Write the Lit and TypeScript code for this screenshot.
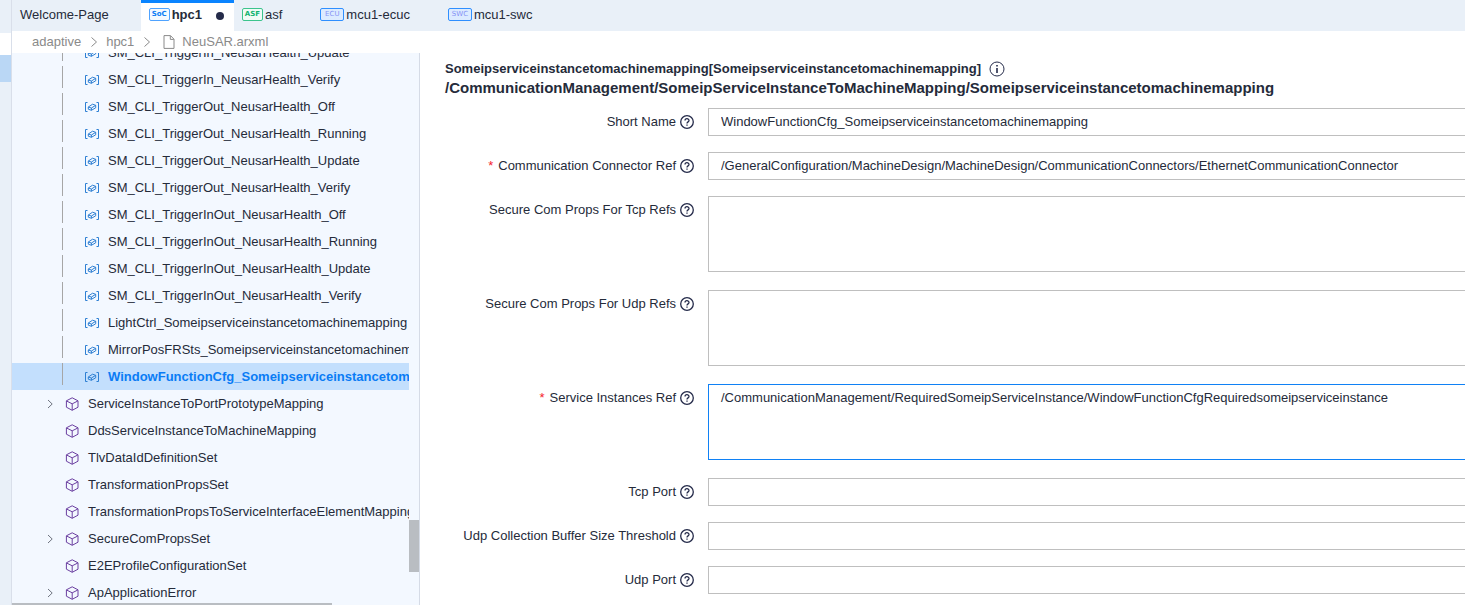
import { LitElement, html, css, svg, nothing } from "lit";
import { customElement } from "lit/decorators.js";
import { classMap } from "lit/directives/class-map.js";

interface Tab {
  label: string;
  badge?: string;
  kind?: string;
  active?: boolean;
}

interface Node {
  label: string;
  leaf?: boolean;
  expandable?: boolean;
  selected?: boolean;
}

interface Field {
  id: string;
  label: string;
  value?: string;
  required?: boolean;
  multiline?: boolean;
  focused?: boolean;
}

const TABS: Tab[] = [
  { label: "Welcome-Page" },
  { label: "hpc1", badge: "SoC", kind: "soc", active: true },
  { label: "asf", badge: "ASF", kind: "asf" },
  { label: "mcu1-ecuc", badge: "ECU", kind: "mcu" },
  { label: "mcu1-swc", badge: "SWC", kind: "mcu" },
];

const NODES: Node[] = [
  { label: "SM_CLI_TriggerIn_NeusarHealth_Update", leaf: true },
  { label: "SM_CLI_TriggerIn_NeusarHealth_Verify", leaf: true },
  { label: "SM_CLI_TriggerOut_NeusarHealth_Off", leaf: true },
  { label: "SM_CLI_TriggerOut_NeusarHealth_Running", leaf: true },
  { label: "SM_CLI_TriggerOut_NeusarHealth_Update", leaf: true },
  { label: "SM_CLI_TriggerOut_NeusarHealth_Verify", leaf: true },
  { label: "SM_CLI_TriggerInOut_NeusarHealth_Off", leaf: true },
  { label: "SM_CLI_TriggerInOut_NeusarHealth_Running", leaf: true },
  { label: "SM_CLI_TriggerInOut_NeusarHealth_Update", leaf: true },
  { label: "SM_CLI_TriggerInOut_NeusarHealth_Verify", leaf: true },
  { label: "LightCtrl_Someipserviceinstancetomachinemapping", leaf: true },
  { label: "MirrorPosFRSts_Someipserviceinstancetomachinemapping", leaf: true },
  { label: "WindowFunctionCfg_Someipserviceinstancetomachinemapping", leaf: true, selected: true },
  { label: "ServiceInstanceToPortPrototypeMapping", expandable: true },
  { label: "DdsServiceInstanceToMachineMapping" },
  { label: "TlvDataIdDefinitionSet" },
  { label: "TransformationPropsSet" },
  { label: "TransformationPropsToServiceInterfaceElementMapping" },
  { label: "SecureComPropsSet", expandable: true },
  { label: "E2EProfileConfigurationSet" },
  { label: "ApApplicationError", expandable: true },
];

const FIELDS: Field[] = [
  { id: "short-name", label: "Short Name", value: "WindowFunctionCfg_Someipserviceinstancetomachinemapping" },
  {
    id: "connector",
    label: "Communication Connector Ref",
    required: true,
    value: "/GeneralConfiguration/MachineDesign/MachineDesign/CommunicationConnectors/EthernetCommunicationConnector",
  },
  { id: "tcp-refs", label: "Secure Com Props For Tcp Refs", multiline: true },
  { id: "udp-refs", label: "Secure Com Props For Udp Refs", multiline: true },
  {
    id: "instances",
    label: "Service Instances Ref",
    required: true,
    multiline: true,
    focused: true,
    value: "/CommunicationManagement/RequiredSomeipServiceInstance/WindowFunctionCfgRequiredsomeipserviceinstance",
  },
  { id: "tcp-port", label: "Tcp Port" },
  { id: "udp-threshold", label: "Udp Collection Buffer Size Threshold" },
  { id: "udp-port", label: "Udp Port" },
];

const cubeIcon = html`<svg class="cube" width="14" height="14" viewBox="0 0 14 14" aria-hidden="true">
  ${svg`<path d="M7.2 .8 13 3.8V10.2L7.2 13.3 1.4 10.2V3.8Z M1.6 4 7.2 6.8 12.8 4 M7.2 6.8V13.2" />`}
</svg>`;

const refIcon = html`<svg class="ref" width="16" height="12" viewBox="0 0 16 12" aria-hidden="true">
  ${svg`<path d="M3.5 1.5H1.5V10.5H3.5 M12.5 1.5H14.5V10.5H12.5" />
    <path d="M4.3 6 8.6 3.2 11.7 4.3V6.8L7.4 9.3 4.3 8.2Z M4.3 6 7.4 7 11.7 4.3 M7.4 7V9.3" />`}
</svg>`;

const chevron = html`<svg class="chevron" width="10" height="10" viewBox="0 0 10 10" aria-hidden="true">
  ${svg`<path d="M3 1 7.2 5 3 9" />`}
</svg>`;

const separator = html`<svg class="separator" width="8" height="12" viewBox="0 0 8 12" aria-hidden="true">
  ${svg`<path d="M1.5 1.5 6.5 6 1.5 10.5" />`}
</svg>`;

const fileIcon = html`<svg class="file" width="12" height="14" viewBox="0 0 12 14" aria-hidden="true">
  ${svg`<path d="M1 .6H7.5L11 4.2V13.4H1Z M7.3 .8V4.4H10.8" />`}
</svg>`;

const helpIcon = html`<svg class="help" width="14" height="14" viewBox="0 0 14 14" aria-hidden="true">
  ${svg`<circle cx="7" cy="7" r="6.3" />
    <path d="M5 5.6C5 3.1 9 3.1 9 5.5 9 6.9 7 6.9 7 8.5 M7 9.5V10.7" />`}
</svg>`;

const infoIcon = html`<svg class="info" width="16" height="16" viewBox="0 0 16 16" aria-hidden="true">
  ${svg`<circle cx="8" cy="8" r="7" /><path class="stem" d="M8 4V5.6 M8 7V12" />`}
</svg>`;

@customElement("app-tabs")
class AppTabs extends LitElement {
  static styles = css`
    :host {
      display: block;
      background: #e9f0f8;
    }
    .bar {
      display: flex;
      height: 31px;
    }
    .tab {
      display: flex;
      align-items: center;
      gap: 2px;
      padding: 0 30px 2px 8px;
      border: 0;
      background: none;
      color: #252b3a;
      font: 13px/18px "Liberation Sans", Arial, sans-serif;
      white-space: nowrap;
    }
    .plain {
      padding-right: 32px;
    }
    .active {
      padding: 0 10px 2px 8px;
      background: #fff;
      box-shadow: inset 0 3px #0a84ff;
      font-weight: bold;
    }
    .badge {
      box-sizing: border-box;
      width: 21px;
      height: 13px;
      border: 1px solid #4fa3ff;
      border-radius: 2px;
      background: #f4f9ff;
      color: #0a7cf5;
      font: bold 7px/11px "DejaVu Sans", sans-serif;
      text-align: center;
    }
    .asf {
      border-color: #3cc48d;
      background: #f0fbf6;
      color: #12b370;
    }
    .mcu {
      width: 24px;
      border-color: #2f8fff;
      background: #dcebff;
      color: #8592f5;
      font-weight: normal;
    }
    .dot {
      width: 8px;
      height: 8px;
      margin: 2px 0 0 12px;
      border-radius: 50%;
      background: #252b4a;
    }
  `;

  render() {
    return html`<nav class="bar" role="tablist">
      ${TABS.map(
        (t) => html`<button
          role="tab"
          aria-selected=${t.active ? "true" : "false"}
          class=${classMap({ tab: true, active: !!t.active, plain: !t.badge })}
        >
          ${t.badge ? html`<span class=${classMap({ badge: true, [t.kind!]: true })}>${t.badge}</span>` : nothing}
          <span>${t.label}</span>
          ${t.active ? html`<span class="dot"></span>` : nothing}
        </button>`
      )}
    </nav>`;
  }
}

@customElement("app-tree")
class AppTree extends LitElement {
  static styles = css`
    :host {
      display: flex;
      position: relative;
      overflow: hidden;
      border-right: 1px solid #d5dbe6;
      background: #f3f8ff;
    }
    .rows {
      flex: 1;
      min-width: 0;
      overflow: hidden;
      margin: -14px 0 0;
      padding: 0;
      list-style: none;
    }
    .row {
      display: flex;
      align-items: center;
      height: 27px;
      padding-left: 33px;
      white-space: nowrap;
    }
    .leaf {
      padding-left: 50px;
    }
    .selected {
      background: #c3dffd;
      color: #0a7cf5;
      font-weight: bold;
    }
    .guide {
      flex: none;
      align-self: flex-start;
      width: 1px;
      height: 22px;
      margin-right: 21px;
      background: #a6a6a6;
    }
    .slot {
      flex: none;
      display: flex;
      width: 20px;
    }
    .label {
      line-height: 18px;
    }
    svg {
      flex: none;
      fill: none;
    }
    .cube {
      margin: 1px 9px 0 0;
      stroke: #6b3fa0;
    }
    .ref {
      margin-right: 8px;
      stroke: #2d7fd3;
    }
    .chevron {
      stroke: #6f7480;
    }
    .gutter {
      flex: none;
      width: 10px;
    }
    .thumb {
      height: 52px;
      margin-top: 467px;
      background: #b9bdc2;
    }
    .hthumb {
      position: absolute;
      left: 0;
      bottom: 0;
      width: 320px;
      height: 2px;
      background: #b9bdc2;
    }
  `;

  render() {
    return html`<ul class="rows" role="tree">
        ${NODES.map(
          (n) => html`<li
            role="treeitem"
            aria-selected=${n.selected ? "true" : "false"}
            class=${classMap({ row: true, leaf: !!n.leaf, selected: !!n.selected })}
          >
            ${n.leaf
              ? html`<span class="guide"></span>${refIcon}`
              : html`<span class="slot">${n.expandable ? chevron : nothing}</span>${cubeIcon}`}
            <span class="label">${n.label}</span>
          </li>`
        )}
      </ul>
      <div class="gutter"><div class="thumb"></div></div>
      <div class="hthumb"></div>`;
  }
}

@customElement("app-form")
class AppForm extends LitElement {
  static styles = css`
    :host {
      display: block;
      overflow: hidden;
      padding: 7px 0 0 25px;
      background: #fff;
    }
    .title,
    .path {
      margin: 0;
      font-weight: bold;
      white-space: nowrap;
    }
    .title {
      display: flex;
      align-items: center;
      gap: 8px;
      font-size: 13px;
      line-height: 18px;
    }
    .path {
      margin-bottom: 10px;
      font-size: 15px;
      line-height: 20px;
    }
    .field {
      display: grid;
      grid-template-columns: 249px 1fr;
      column-gap: 14px;
      align-items: start;
      margin: 0 -1px 16px 0;
    }
    .tall {
      margin-bottom: 18px;
    }
    .caption {
      display: flex;
      align-items: center;
      justify-content: flex-end;
      gap: 4px;
      height: 28px;
      white-space: nowrap;
    }
    .star {
      margin-right: 1px;
      color: #f5222d;
    }
    .control {
      box-sizing: border-box;
      display: block;
      width: 100%;
      height: 28px;
      margin: 0;
      padding: 0 12px 2px;
      border: 1px solid #bfbfbf;
      border-radius: 0;
      outline: 0;
      background: #fff;
      color: #252b3a;
      font: 13px/18px "Liberation Sans", Arial, sans-serif;
    }
    .area {
      height: 76px;
      padding: 4px 12px;
      resize: none;
      overflow: hidden;
    }
    .focused {
      border-color: #1081f5;
    }
    svg {
      flex: none;
      fill: none;
      stroke: #252b4a;
    }
    .help {
      stroke-width: 1.3;
    }
    .stem {
      stroke-width: 1.6;
    }
  `;

  render() {
    return html`<h2 class="title">
        <span>Someipserviceinstancetomachinemapping[Someipserviceinstancetomachinemapping]</span>${infoIcon}
      </h2>
      <h3 class="path">/CommunicationManagement/SomeipServiceInstanceToMachineMapping/Someipserviceinstancetomachinemapping</h3>
      <form>
        ${FIELDS.map(
          (f) => html`<div class=${classMap({ field: true, tall: !!f.multiline })}>
            <label class="caption" for=${f.id}>
              ${f.required ? html`<span class="star">*</span>` : nothing}
              <span>${f.label}</span>${helpIcon}
            </label>
            ${f.multiline
              ? html`<textarea
                  id=${f.id}
                  class=${classMap({ control: true, area: true, focused: !!f.focused })}
                  spellcheck="false"
                  .value=${f.value ?? ""}
                ></textarea>`
              : html`<input id=${f.id} class="control" type="text" .value=${f.value ?? ""} />`}
          </div>`
        )}
      </form>`;
  }
}

@customElement("app-root")
class AppRoot extends LitElement {
  static styles = css`
    :host {
      display: grid;
      grid-template-columns: 12px minmax(0, 1fr);
      height: 100vh;
      overflow: hidden;
      background: #fff;
      color: #252b3a;
      font: 13px/18px "Liberation Sans", Arial, sans-serif;
    }
    .rail {
      display: flex;
      flex-direction: column;
      border-right: 1px solid #d9dfea;
      background: #e9f0f8;
    }
    .gap {
      height: 22px;
      margin-top: 33px;
      background: #fff;
    }
    .mark {
      height: 27px;
      background: #bad7f5;
    }
    .page {
      display: flex;
      flex-direction: column;
      min-height: 0;
    }
    .crumbs {
      display: flex;
      align-items: center;
      height: 22px;
      padding-left: 20px;
      color: #8a8a8a;
    }
    .crumbs svg {
      fill: none;
      stroke: #8a8a8a;
    }
    .separator {
      margin: 0 8px 0 9px;
    }
    .file {
      margin: 0 7px 0 4px;
    }
    .crumb {
      color: inherit;
      text-decoration: none;
    }
    .body {
      flex: 1;
      display: grid;
      grid-template-columns: 408px minmax(0, 1fr);
      grid-template-rows: minmax(0, 1fr);
      min-height: 0;
    }
  `;

  render() {
    return html`<aside class="rail">
        <div class="gap"></div>
        <div class="mark"></div>
      </aside>
      <div class="page">
        <app-tabs></app-tabs>
        <nav class="crumbs">
          <a class="crumb" href="#">adaptive</a>${separator}<a class="crumb" href="#">hpc1</a>${separator}${fileIcon}<a
            class="crumb"
            href="#"
            >NeuSAR.arxml</a
          >
        </nav>
        <div class="body">
          <app-tree></app-tree>
          <app-form></app-form>
        </div>
      </div>`;
  }
}
